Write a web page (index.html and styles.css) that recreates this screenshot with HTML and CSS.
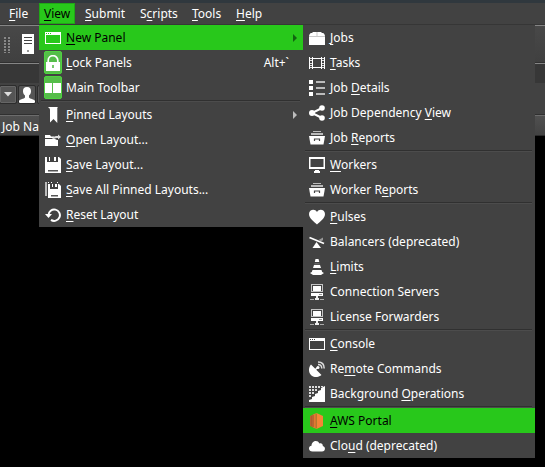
FILE: index.html
```html
<!DOCTYPE html>
<html lang="en">
<head>
<meta charset="utf-8">
<title>Monitor</title>
<link rel="stylesheet" href="styles.css">
</head>
<body>
<div class="titlebar"></div>
<nav class="menubar">
  <span class="top file"><u>F</u>ile</span><span class="top view"><u>V</u>iew</span><span class="top submit"><u>S</u>ubmit</span><span class="top scripts">S<u>c</u>ripts</span><span class="top tools"><u>T</u>ools</span><span class="top help"><u>H</u>elp</span>
</nav>
<div class="toolbar">
  <span class="grip"></span>
  <svg class="server" width="12" height="20" shape-rendering="crispEdges"><rect width="12" height="20" rx="1" fill="#fff"/><path d="M2 3.500h8M2 6.500h8M2 9.500h8" stroke="#444"/><rect x="5" y="16" width="2" height="2" fill="#999"/></svg>
</div>
<div class="tabstrip"></div>
<div class="filters">
  <span class="btn drop"><svg width="8" height="5"><path d="M0 0h8L4 4.500z" fill="#ddd"/></svg></span>
  <span class="btn"><svg width="16" height="16"><path d="M8 0C5 0 3.800 2 4 4.500c.1 2 1 3 2 4v2C5 12 1 12 0 14v2h16v-2c-1-2-5-2-6-3.500v-2c1-1 1.900-2 2-4C12.200 2 11 0 8 0z" fill="#fff"/></svg></span>
  <span class="btn"></span>
</div>
<div class="header">Job Na</div>
<main class="list"></main>

<div class="menu main-menu">
  <div class="item on"><svg class="ic" viewBox="0 0 16 16" shape-rendering="crispEdges"><path d="M0 2h16v12H0zM1 5v8h14V5z" fill="#fff" fill-rule="evenodd"/><path d="M1 3.500h1M3 3.500h1M5 3.500h1" stroke="#28c81b"/></svg><span><u>N</u>ew Panel</span><i class="arrow"></i></div>
  <div class="item"><span class="check"><svg class="ic" viewBox="0 0 16 16"><path d="M3.200 7V5.500a4.800 4.800 0 0 1 9.600 0V7" fill="none" stroke="#fff" stroke-width="1.700"/><path d="M1 7h14v9H1z" fill="#fff"/><path d="M7.200 10h1.600v3H7.200z" fill="#55bd49"/></svg></span><span><u>L</u>ock Panels</span><span class="key">Alt+`</span></div>
  <div class="item"><span class="check"><svg class="ic" viewBox="0 0 16 16" shape-rendering="crispEdges"><path d="M0 3h7v10H0zM8 3h8v10H8z" fill="#fff"/></svg></span><span>Main Toolbar</span></div>
  <div class="sep"></div>
  <div class="item"><svg class="ic" viewBox="0 0 16 16"><path d="M3 0h10c-.7.600-.7 1-.7 2v14L8.500 12 5 15.500V3C5 1.500 4 1 3 0z" fill="#fff"/></svg><span><u>P</u>inned Layouts</span><i class="arrow"></i></div>
  <div class="item"><svg class="ic" viewBox="0 0 16 16"><path d="M0 3h5l1 1.500h3V6H0zM0 7h10l2 1h1v6H0z" fill="#fff"/><path d="M7 6.500C9 4 11 4 13 4V2.500L16 5l-3 2.500V6c-2 0-3 0-4 1z" fill="#ddd"/></svg><span><u>O</u>pen Layout...</span></div>
  <div class="item"><svg class="ic" viewBox="0 0 16 16"><path d="M0 0h2v5h11V0h1l2 2v14H0zM4 0h1v4H4zM9 0h2v4H9z" fill="#fff"/><path d="M3 13h10v1.500H3z" fill="#555"/></svg><span><u>S</u>ave Layout...</span></div>
  <div class="item"><svg class="ic" viewBox="0 0 16 16"><path d="M0 0h2v14H0z" fill="#bbb"/><path d="M3 2h2v5h8V2h1l2 2v12H3zM7 2h1v3H7zM10 2h2v3h-2zM3 0h1v1H3zM6 0h1v1H6zM12 0h1v1h-1z" fill="#fff"/><path d="M6 13h7v1.500H6z" fill="#555"/></svg><span><u>S</u>ave All Pinned Layouts...</span></div>
  <div class="item"><svg class="ic" viewBox="0 0 16 16"><path d="M3.500 8A5.700 5.700 0 1 1 6 12.900" fill="none" stroke="#fff" stroke-width="2"/><path d="M0 7h7l-3.500 4z" fill="#fff"/></svg><span><u>R</u>eset Layout</span></div>
</div>

<div class="menu sub-menu">
  <div class="item"><svg class="ic" viewBox="0 0 16 16"><path d="M0 6C.5 3.500 1.500 3 3 3l1-1h8l1 1c1.500 0 2.500.5 3 3v9H0z" fill="#fff"/><path d="M0 6.500h16M8 2v4" stroke="#bbb" stroke-width=".8"/></svg><span><u>J</u>obs</span></div>
  <div class="item"><svg class="ic" viewBox="0 0 16 16" shape-rendering="crispEdges"><path d="M0 2h1v12H0zM3 2h1v12H3zM12 2h1v12h-1zM15 2h1v12h-1zM4 3h8v1H4zM4 12h8v1H4z" fill="#fff"/><path d="M1 3h2v1H1zM1 5h2v1H1zM1 8h2v1H1zM1 10h2v1H1zM1 12h2v1H1zM13 3h2v1h-2zM13 5h2v1h-2zM13 8h2v1h-2zM13 10h2v1h-2zM13 12h2v1h-2z" fill="#ddd"/></svg><span><u>T</u>asks</span></div>
  <div class="item"><svg class="ic" viewBox="0 0 16 16" shape-rendering="crispEdges"><path d="M0 0h4v4H0zM0 6h4v4H0zM0 12h4v4H0z" fill="#fff"/><path d="M7 1h9v2H7zM7 7h9v2H7zM7 13h9v2H7z" fill="#bbb"/></svg><span>Job <u>D</u>etails</span></div>
  <div class="item"><svg class="ic" viewBox="0 0 16 16"><path d="M13 3L3 8l10 5" fill="none" stroke="#fff" stroke-width="2"/><circle cx="13" cy="3" r="2.800" fill="#fff"/><circle cx="3" cy="8" r="3" fill="#fff"/><circle cx="13" cy="13" r="2.800" fill="#fff"/></svg><span>Job Dependency <u>V</u>iew</span></div>
  <div class="item"><svg class="ic" viewBox="0 0 16 16"><path d="M4 1h8v1H4zM2 3h12v2H2z" fill="#bbb"/><path d="M0 6h16l-1.500 8.500H1.500z" fill="#fff"/><path d="M5.500 11V9h5v2" fill="none" stroke="#444" stroke-width="1.200"/></svg><span>Job <u>R</u>eports</span></div>
  <div class="sep"></div>
  <div class="item"><svg class="ic" viewBox="0 0 16 16"><path d="M0 0h16v12H0zM1.500 2v8h13V2z" fill="#fff" fill-rule="evenodd"/><path d="M6 13h4v1h1v2H5v-2h1z" fill="#fff"/></svg><span><u>W</u>orkers</span></div>
  <div class="item"><svg class="ic" viewBox="0 0 16 16"><path d="M4 1h8v1H4zM2 3h12v2H2z" fill="#bbb"/><path d="M0 6h16l-1.500 8.500H1.500z" fill="#fff"/><path d="M5.500 11V9h5v2" fill="none" stroke="#444" stroke-width="1.200"/></svg><span>Worker R<u>e</u>ports</span></div>
  <div class="sep"></div>
  <div class="item"><svg class="ic" viewBox="0 0 16 16"><path d="M8 15.500C5.500 13 0 9.500 0 5 0 .5 6 -.8 8 3c2-3.800 8-2.500 8 2 0 4.500-5.500 8-8 10.500z" fill="#fff"/></svg><span><u>P</u>ulses</span></div>
  <div class="item"><svg class="ic" viewBox="0 0 16 16"><path d="M.5 3.500l14.500 6" stroke="#fff" stroke-width="1.800"/><path d="M7.500 8l4.500 6H3.500z" fill="#fff"/><path d="M9.500 6l4.500-2.500v2.800l-2.500 1z" fill="#999"/></svg><span>Balancers (deprecated)</span></div>
  <div class="item"><svg class="ic" viewBox="0 0 16 16"><path d="M6.500 0h3l.8 3H5.800zM5 6h6l1 3H4zM3.500 11h9l.7 2 1.800 1-3 2H4l-3-2 1.800-1z" fill="#fff"/><path d="M5.600 4h4.900l.5 1.500H5z" fill="#666"/></svg><span><u>L</u>imits</span></div>
  <div class="item"><svg class="ic" viewBox="0 0 16 16" shape-rendering="crispEdges"><path d="M2 0h12v8H2zM3 1v6h10V1z" fill="#c4c4c4" fill-rule="evenodd"/><path d="M4 2h8v5H4zM2 9h12v3H2z" fill="#fff"/><path d="M10 10h3v1h-3z" fill="#999"/><path d="M7 12h2v2H7zM6 14h4v2H6z" fill="#eee"/><path d="M1 15h4v1H1zM11 15h4v1h-4z" fill="#aaa"/></svg><span>Connection Servers</span></div>
  <div class="item"><svg class="ic" viewBox="0 0 16 16" shape-rendering="crispEdges"><path d="M2 0h12v8H2zM3 1v6h10V1z" fill="#c4c4c4" fill-rule="evenodd"/><path d="M4 2h8v5H4zM2 9h12v3H2z" fill="#fff"/><path d="M10 10h3v1h-3z" fill="#999"/><path d="M7 12h2v2H7zM6 14h4v2H6z" fill="#eee"/><path d="M1 15h4v1H1zM11 15h4v1h-4z" fill="#aaa"/></svg><span>License Forwarders</span></div>
  <div class="sep"></div>
  <div class="item"><svg class="ic" viewBox="0 0 16 16" shape-rendering="crispEdges"><path d="M0 2h16v12H0zM1 5v8h14V5z" fill="#fff" fill-rule="evenodd"/><path d="M1 3.500h1M3 3.500h1M5 3.500h1" stroke="#444"/></svg><span><u>C</u>onsole</span></div>
  <div class="item"><svg class="ic" viewBox="0 0 16 16"><path d="M2 3.500L12.500 14C9 17 4 16.500 2 14-.8 11-.6 6.500 2 3.500z" fill="#fff"/><path d="M6 9l3-3" stroke="#fff" stroke-width="1.500"/><circle cx="9" cy="6.500" r="1.500" fill="#fff"/><path d="M9 3.500c2.500 0 3.800 1.500 3.800 4M9 .9c4.200 0 6.200 2.300 6.200 6.500" fill="none" stroke="#ddd" stroke-width="1.500"/></svg><span>Re<u>m</u>ote Commands</span></div>
  <div class="item"><svg class="ic" viewBox="0 0 16 16"><path d="M16 0v16H0v-2l3-1v-2l3-1V8l3-1V5l3-1V2z" fill="#fff"/><path d="M0 0h2v2H0zM3 0h2v2H3zM6 0h2v2H6zM9 0h2v2H9zM12 0h2v1h-2zM0 3h2v2H0zM3 3h2v2H3zM6 3h2v2H6zM0 6h2v2H0zM3 6h2v2H3zM0 9h2v2H0z" fill="#ddd"/></svg><span>Background <u>O</u>perations</span></div>
  <div class="sep"></div>
  <div class="item on"><svg class="ic" viewBox="0 0 16 16"><path d="M1 3l3-1.500v13L1 13z" fill="#b96332"/><path d="M4 1.500L7.500 0v16L4 14.500z" fill="#df7b32"/><path d="M7.500 0L14 3v10l-6.500 3z" fill="#f58536"/><path d="M4.500 2v12M7.200 1v14M2.500 3v10" stroke="#a8562b" stroke-width=".6"/></svg><span><u>A</u>WS Portal</span></div>
  <div class="item"><svg class="ic" viewBox="0 0 16 16"><path d="M3.500 13.500C-1 13.500-1 8 2.500 7.700 2.500 3 8.500 1 10.500 5.500c2-.7 3.500.5 3.300 2.500 3.200.7 2.700 5.500-.8 5.500z" fill="#fff"/></svg><span>Clo<u>u</u>d (deprecated)</span></div>
</div>
</body>
</html>
```
FILE: styles.css
```css
* { box-sizing: border-box; }
body {
  margin: 0;
  width: 545px;
  height: 467px;
  overflow: hidden;
  display: flex;
  flex-direction: column;
  background: #000;
  color: #fff;
  font: 12px/25px "Noto Sans", sans-serif;
  white-space: nowrap;
}
u {
  text-decoration: underline 1px;
  text-underline-offset: 2px;
  text-decoration-skip-ink: none;
}
svg { display: block; flex: none; }

.titlebar { height: 3px; background: #30383e; }
.menubar {
  height: 22px;
  display: flex;
  background: #424242;
  border-bottom: 1px solid #363636;
}
.top { height: 22px; line-height: 21px; padding-left: 4px; }
.file { margin-left: 5px; width: 34px; }
.view { width: 36px; height: 21px; background: #28c81b; border: 1px solid #20a816; color: #000; line-height: 19px; }
.submit { width: 55px; margin-left: 6px; }
.scripts { width: 52px; }
.tools { width: 44px; }

.toolbar {
  height: 38px;
  display: flex;
  align-items: center;
  padding-left: 4px;
  background: linear-gradient(#484848, #404040);
  border-top: 1px solid #858585;
  border-bottom: 1px solid #303030;
}
.grip {
  width: 6px;
  height: 17px;
  margin-right: 12px;
  background: repeating-linear-gradient(#424242 0 1px, transparent 1px 3px), repeating-linear-gradient(90deg, #888 0 2px, #424242 2px 4px);
}
.tabstrip { height: 20px; background: #373737; border-top: 1px solid #858585; }
.filters {
  height: 32px;
  display: flex;
  gap: 3px;
  padding-top: 3px;
  background: #424242;
  border-bottom: 1px solid #303030;
}
.btn {
  width: 16px;
  height: 17px;
  display: flex;
  align-items: center;
  justify-content: center;
  background: #555;
  outline: 1px solid #2c2c2c;
  border-radius: 1px;
}
.drop { border: 1px solid #666; }
.header {
  height: 21px;
  padding-left: 2px;
  line-height: 21px;
  background: linear-gradient(#505050, #434343);
  border-top: 1px solid #6c6c6c;
  border-bottom: 1px solid #2b2b2b;
}
.list { flex: 1; background: #000; }

.menu { position: absolute; top: 25px; background: #424242; }
.main-menu { left: 39px; width: 264px; }
.sub-menu { left: 303px; width: 232px; }
.item { height: 25px; display: flex; align-items: center; padding-left: 6px; }
.item > span:not(.check) { line-height: 25px; }
.ic { width: 16px; height: 16px; margin-right: 5px; }
.on { background: #28c81b; color: #000; }
.check {
  width: 18px;
  height: 23px;
  margin: 0 4px 0 -1px;
  display: flex;
  align-items: center;
  justify-content: center;
  background: #55bd49;
  border: 1px solid #4ed43f;
  border-radius: 2px;
}
.check .ic { margin: 0; }
.key { margin-left: auto; margin-right: 14px; }
.arrow {
  margin-left: auto;
  margin-right: 6px;
  border-left: 4px solid #bcbcbc;
  border-top: 4px solid transparent;
  border-bottom: 4px solid transparent;
}
.on .arrow { border-left-color: #116410; }
.sep {
  height: 2px;
  margin: 0 3px 0 2px;
  border-top: 1px solid #303030;
  border-bottom: 1px solid #4c4c4c;
}
```
